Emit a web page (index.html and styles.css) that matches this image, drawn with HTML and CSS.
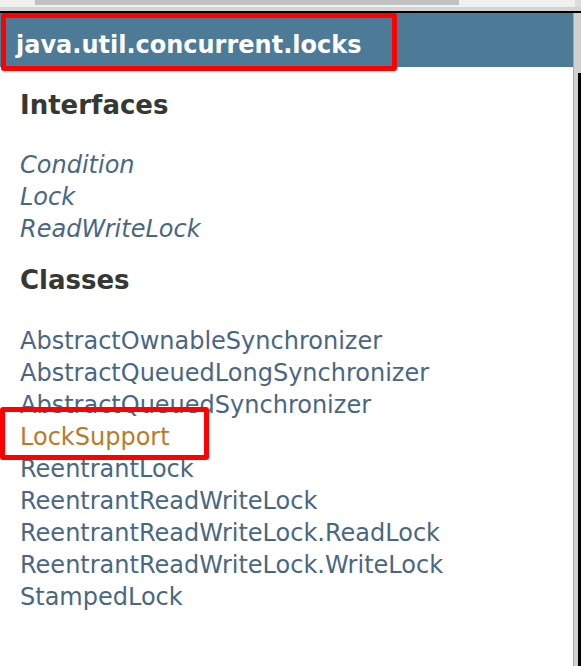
FILE: index.html
```html
<!DOCTYPE html>
<html>
<head>
<meta charset="utf-8">
<link rel="stylesheet" href="styles.css">
</head>
<body>
<div class="page">
  <div class="hscroll">
    <div class="track"><div class="thumb"></div></div>
    <div class="corner"></div>
  </div>
  <div class="hline"></div>
  <div class="row">
    <div class="main">
      <h1 class="bar"><span class="title">java.util.concurrent.locks</span></h1>
      <div class="box box-title"></div>
      <div class="index">
        <h2 class="heading">Interfaces</h2>
        <ul class="list">
          <li><a class="link iface">Condition</a></li>
          <li><a class="link iface">Lock</a></li>
          <li><a class="link iface">ReadWriteLock</a></li>
        </ul>
        <h2 class="heading">Classes</h2>
        <ul class="list">
          <li><a class="link">AbstractOwnableSynchronizer</a></li>
          <li><a class="link">AbstractQueuedLongSynchronizer</a></li>
          <li><a class="link">AbstractQueuedSynchronizer</a></li>
          <li class="marked"><a class="link active">LockSupport</a><div class="box box-item"></div></li>
          <li><a class="link">ReentrantLock</a></li>
          <li><a class="link">ReentrantReadWriteLock</a></li>
          <li><a class="link">ReentrantReadWriteLock.ReadLock</a></li>
          <li><a class="link">ReentrantReadWriteLock.WriteLock</a></li>
          <li><a class="link">StampedLock</a></li>
        </ul>
      </div>
    </div>
    <div class="edge"><div class="edge-dark"></div></div>
  </div>
</div>
</body>
</html>
```

FILE: styles.css
```css
html, body {
  margin: 0;
  padding: 0;
  background: #ffffff;
  height: 100%;
}
.page {
  width: 581px;
  height: 666px;
  display: flex;
  flex-direction: column;
  overflow: hidden;
  font-family: "DejaVu Sans", sans-serif;
}
.hscroll {
  display: flex;
  height: 7px;
  background: #f0f0f0;
}
.track {
  flex: 1;
  padding-left: 35px;
}
.thumb {
  width: 424px;
  height: 5px;
  background: #c1c1c1;
}
.corner {
  width: 6px;
  background: #dcdcdc;
}
.hline {
  height: 4px;
  background: #d4d4d4;
  border-bottom: 2px solid #000000;
}
.row {
  flex: 1;
  display: flex;
  min-height: 0;
}
.main {
  flex: 1;
  position: relative;
  background: #ffffff;
}
.edge {
  width: 7px;
  display: flex;
  border-left: 1px solid #a8a8a8;
  background: #d0d0d0;
  justify-content: flex-end;
}
.edge-dark {
  width: 3px;
  margin-top: 60px;
  background: #000000;
}
.bar {
  margin: 0;
  height: 54px;
  box-sizing: border-box;
  padding: 19px 0 0 16px;
  background: #4d7a97;
  color: #ffffff;
  font-size: 24px;
  line-height: 26px;
  font-weight: bold;
}
.box {
  position: absolute;
  border: 5px solid #ff0000;
  border-radius: 3px;
  box-sizing: border-box;
}
.box-title {
  left: 1px;
  top: 0px;
  width: 396px;
  height: 58px;
}
.index {
  padding: 22px 0 0 20px;
}
.heading {
  margin: 0;
  font-size: 26px;
  line-height: 32px;
  font-weight: bold;
  color: #353833;
}
.list {
  list-style: none;
  margin: 28px 0 19px 0;
  padding: 0;
}
.list + .heading + .list {
  margin-top: 29px;
}
.list li {
  font-size: 24px;
  line-height: 32px;
  white-space: nowrap;
}
.link {
  color: #4a6782;
  text-decoration: none;
}
.iface {
  font-style: italic;
}
.active {
  color: #bb7a2a;
}
.marked {
  position: relative;
}
.box-item {
  left: -20px;
  top: -14px;
  width: 209px;
  height: 53px;
}
```
